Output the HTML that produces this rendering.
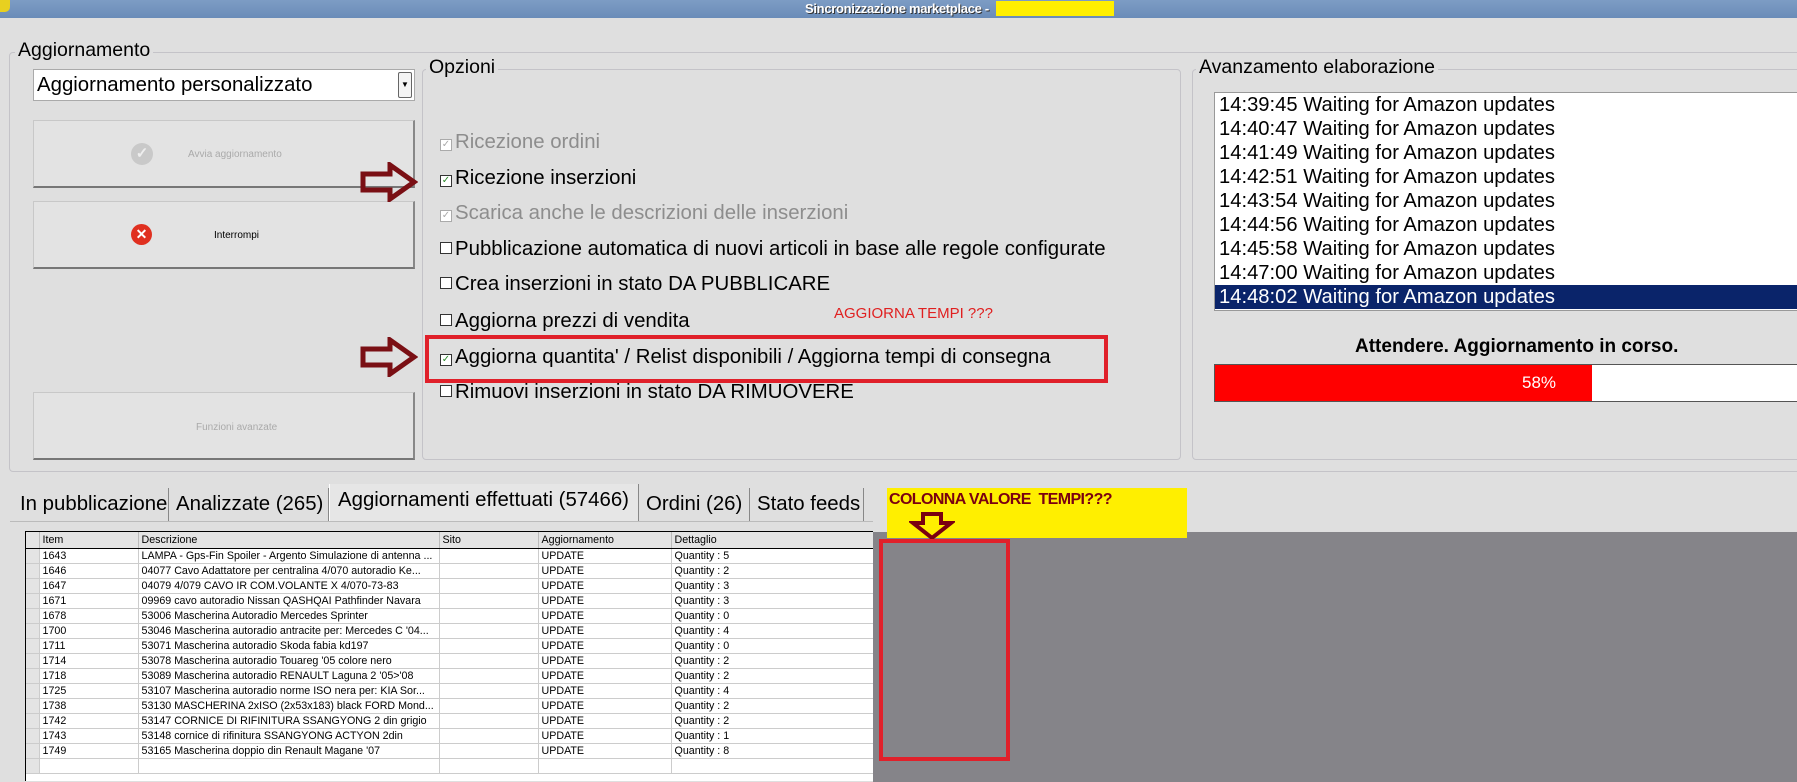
<!DOCTYPE html>
<html><head><meta charset="utf-8"><style>
*{box-sizing:border-box;margin:0;padding:0}
body{width:1797px;height:777px;background:#dfdfdf;font-family:"Liberation Sans",sans-serif;position:relative;overflow:hidden;color:#000}
.a{position:absolute}
.tb{left:0;top:0;width:1797px;height:18px;background:linear-gradient(#7d9cc4,#6a8cb8);}
.tt{left:805px;top:1px;font-size:13px;color:#fff;font-weight:bold;text-shadow:1px 1px 0 #333;letter-spacing:-0.3px}
.gb{border:1px solid #c4c3c8;border-radius:4px}
.lbl{background:#dfdfdf;font-size:19.5px;padding:0 3px}
.btn{background:#e3e3e3;border:1px solid #c8c8c8;border-right:2px solid #888;border-bottom:2px solid #777}
.opt{left:440px;font-size:20.4px;white-space:nowrap}
.cb{display:inline-block;width:12px;height:12px;border:1px solid #333;background:#fff;vertical-align:1px;margin-right:3px;font-size:10px;line-height:10px;text-align:center;color:#2a8a2a}
.dis{color:#8d8d8d}.dis .cb{border-color:#aaa;color:#aaa}
.list div{height:24px;font-size:20.2px;line-height:24px;padding-left:4px;white-space:nowrap}
.tab{top:488px;height:33px;font-size:20.4px;line-height:33px;padding-left:3px;border-right:1px solid #888;white-space:nowrap;overflow:hidden}
table{border-collapse:collapse;font-size:10.7px}
td{height:15px;border-bottom:1px solid #ccc;border-right:1px solid #ccc;padding-left:3px;white-space:nowrap;overflow:hidden;background:#fff}
th{height:16px;font-weight:normal;text-align:left;padding-left:3px;border-right:1px solid #bbb;background:#e4e4e4;border-bottom:1px solid #000}
</style></head><body>
<div class="a tb"></div>
<div class="a" style="left:0;top:0;width:10px;height:12px;background:#e8d020;border-radius:0 0 5px 0"></div>
<div class="a tt">Sincronizzazione marketplace -</div>
<div class="a" style="left:996px;top:1px;width:118px;height:15px;background:#ffef00"></div>

<div class="a gb" style="left:9px;top:52px;width:1800px;height:420px"></div>
<div class="a lbl" style="left:15px;top:39px">Aggiornamento</div>

<div class="a" style="left:33px;top:69px;width:382px;height:32px;background:#fff;border:1px solid #aaa;font-size:20.4px;line-height:30px;padding-left:3px">Aggiornamento personalizzato</div>
<div class="a" style="left:398px;top:72px;width:14px;height:26px;border:1px solid #666;border-radius:2px;background:#f4f4f4;font-size:8px;text-align:center;line-height:24px">▼</div>

<div class="a btn" style="left:33px;top:120px;width:382px;height:68px"></div>
<div class="a" style="left:131px;top:143px;width:22px;height:22px;border-radius:50%;background:#c9c9c9;color:#eee;font-size:15px;text-align:center;line-height:22px;font-weight:bold">✓</div>
<div class="a" style="left:188px;top:149px;font-size:10px;color:#aaa">Avvia aggiornamento</div>
<div class="a btn" style="left:33px;top:201px;width:382px;height:68px"></div>
<div class="a" style="left:131px;top:224px;width:21px;height:21px;border-radius:50%;background:#e03020;color:#fff;font-size:14px;text-align:center;line-height:21px;font-weight:bold">✕</div>
<div class="a" style="left:214px;top:230px;font-size:10px">Interrompi</div>
<div class="a btn" style="left:33px;top:392px;width:382px;height:68px"></div>
<div class="a" style="left:196px;top:422px;font-size:10px;color:#aaa">Funzioni avanzate</div>

<div class="a gb" style="left:422px;top:69px;width:759px;height:391px"></div>
<div class="a lbl" style="left:426px;top:56px">Opzioni</div>
<div class="a opt dis" style="top:131px"><span class="cb">✓</span>Ricezione ordini</div>
<div class="a opt" style="top:167px"><span class="cb">✓</span>Ricezione inserzioni</div>
<div class="a opt dis" style="top:202px"><span class="cb">✓</span>Scarica anche le descrizioni delle inserzioni</div>
<div class="a opt" style="top:238px"><span class="cb"></span>Pubblicazione automatica di nuovi articoli in base alle regole configurate</div>
<div class="a opt" style="top:273px"><span class="cb"></span>Crea inserzioni in stato DA PUBBLICARE</div>
<div class="a opt" style="top:310px"><span class="cb"></span>Aggiorna prezzi di vendita</div>
<div class="a opt" style="top:346px"><span class="cb">✓</span>Aggiorna quantita' / Relist disponibili / Aggiorna tempi di consegna</div>
<div class="a opt" style="top:381px"><span class="cb"></span>Rimuovi inserzioni in stato DA RIMUOVERE</div>
<div class="a" style="left:834px;top:305px;font-size:15px;color:#e02020">AGGIORNA TEMPI ???</div>
<div class="a" style="left:425px;top:335px;width:683px;height:48px;border:4px solid #e0202a"></div>
<svg class="a" style="left:360px;top:162px" width="58" height="40"><path d="M3 12H30V3L54 20L30 37V28H3Z" fill="none" stroke="#7a0f14" stroke-width="5"/></svg>
<svg class="a" style="left:360px;top:337px" width="58" height="40"><path d="M3 12H30V3L54 20L30 37V28H3Z" fill="none" stroke="#7a0f14" stroke-width="5"/></svg>

<div class="a gb" style="left:1192px;top:69px;width:620px;height:391px"></div>
<div class="a lbl" style="left:1196px;top:56px">Avanzamento elaborazione</div>
<div class="a list" style="left:1214px;top:92px;width:600px;height:219px;background:#fff;border:1px solid #999">
<div>14:39:45 Waiting for Amazon updates</div><div>14:40:47 Waiting for Amazon updates</div><div>14:41:49 Waiting for Amazon updates</div><div>14:42:51 Waiting for Amazon updates</div><div>14:43:54 Waiting for Amazon updates</div><div>14:44:56 Waiting for Amazon updates</div><div>14:45:58 Waiting for Amazon updates</div><div>14:47:00 Waiting for Amazon updates</div><div style="background:#0a246a;color:#fff">14:48:02 Waiting for Amazon updates</div></div>
<div class="a" style="left:1355px;top:336px;font-size:19px;font-weight:bold">Attendere. Aggiornamento in corso.</div>
<div class="a" style="left:1214px;top:364px;width:600px;height:38px;background:#fff;border:1px solid #555"></div>
<div class="a" style="left:1215px;top:365px;width:377px;height:36px;background:#f00"></div>
<div class="a" style="left:1522px;top:373px;font-size:17px;color:#fff">58%</div>

<div class="a tab" style="left:17px;width:152px">In pubblicazione</div>
<div class="a tab" style="left:173px;width:156px">Analizzate (265)</div>
<div class="a tab" style="left:329px;width:310px;top:484px;height:37px;background:#e6e6e6;border-left:1px solid #fff;padding-left:8px">Aggiornamenti effettuati (57466)</div>
<div class="a tab" style="left:643px;width:107px">Ordini (26)</div>
<div class="a tab" style="left:754px;width:110px">Stato feeds</div>
<div class="a" style="left:10px;top:521px;width:863px;height:1px;background:#bbb"></div>

<div class="a" style="left:873px;top:532px;width:930px;height:250px;background:#858489"></div>
<div class="a" style="left:887px;top:488px;width:300px;height:50px;background:#ffef00"></div>
<div class="a" style="left:889px;top:491px;font-size:16px;font-weight:bold;color:#7a0010;letter-spacing:-0.6px">COLONNA VALORE&nbsp; TEMPI???</div>
<svg class="a" style="left:909px;top:511px" width="46" height="30"><path d="M14 3H32V12H42L23 27L4 12H14Z" fill="none" stroke="#7a0010" stroke-width="4"/></svg>
<div class="a" style="left:879px;top:539px;width:131px;height:222px;border:4px solid #e0202a"></div>

<div class="a" style="left:25px;top:531px;width:848px;height:250px;background:#fff;border-left:1px solid #000;border-top:1px solid #000;overflow:hidden">
<table style="width:848px;table-layout:fixed">
<colgroup><col style="width:13px"><col style="width:99px"><col style="width:301px"><col style="width:99px"><col style="width:133px"><col style="width:203px"></colgroup>
<tr><th></th><th>Item</th><th>Descrizione</th><th>Sito</th><th>Aggiornamento</th><th>Dettaglio</th></tr>
<tr><td style="background:#e4e4e4"></td><td>1643</td><td>LAMPA - Gps-Fin Spoiler - Argento Simulazione di antenna ...</td><td></td><td>UPDATE</td><td>Quantity : 5</td></tr>
<tr><td style="background:#e4e4e4"></td><td>1646</td><td>04077 Cavo Adattatore per centralina 4/070 autoradio Ke...</td><td></td><td>UPDATE</td><td>Quantity : 2</td></tr>
<tr><td style="background:#e4e4e4"></td><td>1647</td><td>04079 4/079 CAVO IR COM.VOLANTE X 4/070-73-83</td><td></td><td>UPDATE</td><td>Quantity : 3</td></tr>
<tr><td style="background:#e4e4e4"></td><td>1671</td><td>09969 cavo autoradio Nissan QASHQAI Pathfinder Navara</td><td></td><td>UPDATE</td><td>Quantity : 3</td></tr>
<tr><td style="background:#e4e4e4"></td><td>1678</td><td>53006 Mascherina Autoradio Mercedes Sprinter</td><td></td><td>UPDATE</td><td>Quantity : 0</td></tr>
<tr><td style="background:#e4e4e4"></td><td>1700</td><td>53046 Mascherina autoradio antracite per: Mercedes C '04...</td><td></td><td>UPDATE</td><td>Quantity : 4</td></tr>
<tr><td style="background:#e4e4e4"></td><td>1711</td><td>53071 Mascherina autoradio Skoda fabia kd197</td><td></td><td>UPDATE</td><td>Quantity : 0</td></tr>
<tr><td style="background:#e4e4e4"></td><td>1714</td><td>53078 Mascherina autoradio Touareg '05 colore nero</td><td></td><td>UPDATE</td><td>Quantity : 2</td></tr>
<tr><td style="background:#e4e4e4"></td><td>1718</td><td>53089 Mascherina autoradio RENAULT Laguna 2 '05&gt;'08</td><td></td><td>UPDATE</td><td>Quantity : 2</td></tr>
<tr><td style="background:#e4e4e4"></td><td>1725</td><td>53107 Mascherina autoradio norme ISO nera per: KIA Sor...</td><td></td><td>UPDATE</td><td>Quantity : 4</td></tr>
<tr><td style="background:#e4e4e4"></td><td>1738</td><td>53130 MASCHERINA 2xISO (2x53x183) black FORD Mond...</td><td></td><td>UPDATE</td><td>Quantity : 2</td></tr>
<tr><td style="background:#e4e4e4"></td><td>1742</td><td>53147 CORNICE DI RIFINITURA SSANGYONG 2 din grigio</td><td></td><td>UPDATE</td><td>Quantity : 2</td></tr>
<tr><td style="background:#e4e4e4"></td><td>1743</td><td>53148 cornice di rifinitura SSANGYONG ACTYON 2din</td><td></td><td>UPDATE</td><td>Quantity : 1</td></tr>
<tr><td style="background:#e4e4e4"></td><td>1749</td><td>53165 Mascherina doppio din Renault Magane '07</td><td></td><td>UPDATE</td><td>Quantity : 8</td></tr>
<tr><td style="background:#e4e4e4"></td><td></td><td></td><td></td><td></td><td></td></tr>
</table></div>
</body></html>
